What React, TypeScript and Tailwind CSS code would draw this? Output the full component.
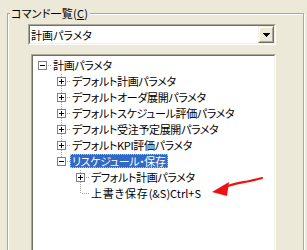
type Box = 'plus' | 'minus' | null;

type Node = {
  label: React.ReactNode;
  level: number;
  box: Box;
  vertical: 'full' | 'top' | 'none';
  selected?: boolean;
};

const nodes: Node[] = [
  { label: '計画パラメタ', level: 0, box: 'minus', vertical: 'none' },
  { label: 'デフォルト計画パラメタ', level: 1, box: 'plus', vertical: 'full' },
  { label: 'デフォルトオーダ展開パラメタ', level: 1, box: 'plus', vertical: 'full' },
  { label: 'デフォルトスケジュール評価パラメタ', level: 1, box: 'plus', vertical: 'full' },
  { label: 'デフォルト受注予定展開パラメタ', level: 1, box: 'plus', vertical: 'full' },
  { label: 'デフォルトKPI評価パラメタ', level: 1, box: 'plus', vertical: 'full' },
  { label: 'リスケジュール・保存', level: 1, box: 'minus', vertical: 'top', selected: true },
  { label: 'デフォルト計画パラメタ', level: 2, box: 'plus', vertical: 'full' },
  {
    label: (
      <>
        <span className="tracking-[0.8px]">上書き保存</span>
        <span className="tracking-normal">(&amp;S)Ctrl+S</span>
      </>
    ),
    level: 2,
    box: null,
    vertical: 'top',
  },
];

const DOT = '#a0a0a0';

function Gutter({ node }: { node: Node }) {
  const cx = 9 + node.level * 19;
  const width = 18 + node.level * 19;
  const dots: React.ReactElement[] = [];

  if (node.vertical !== 'none') {
    const end = node.vertical === 'full' ? 16 : 9;
    for (let y = 1; y < end; y += 2) {
      dots.push(<rect key={`v${y}`} x={cx} y={y} width={1} height={1} fill={DOT} />);
    }
  }
  for (let x = cx + 2; x < width; x += 2) {
    dots.push(<rect key={`h${x}`} x={x} y={8} width={1} height={1} fill={DOT} />);
  }

  return (
    <svg width={width} height={16} className="shrink-0" shapeRendering="crispEdges">
      {dots}
      {node.box && (
        <g>
          <rect x={cx - 4} y={4} width={9} height={9} fill="white" />
          <rect x={cx - 3.5} y={4.5} width={8} height={8} fill="none" stroke="#808080" />
          <rect x={cx - 2} y={8} width={5} height={1} fill="black" />
          {node.box === 'plus' && <rect x={cx} y={6} width={1} height={5} fill="black" />}
        </g>
      )}
    </svg>
  );
}

function TreeRow({ node }: { node: Node }) {
  return (
    <div className="flex h-4 items-center">
      <Gutter node={node} />
      <span
        className={
          node.selected
            ? 'flex h-[14px] items-center whitespace-nowrap border border-dotted border-[#c8c890] bg-[#316ac5] px-px text-white'
            : 'flex h-[14px] items-center whitespace-nowrap px-[2px] text-black'
        }
      >
        {node.label}
      </span>
    </div>
  );
}

export default function App() {
  return (
    <div className="relative h-[250px] w-[307px] overflow-hidden bg-[#ece9d8] pt-[6px] pl-[7px] font-['Noto_Sans_CJK_JP',sans-serif] text-[11px] leading-[14px] [font-feature-settings:'palt']">
      <fieldset className="h-[300px] w-[297px] border border-[#aca899] shadow-[inset_1px_1px_0_#ffffff,1px_1px_0_#ffffff]">
        <legend className="ml-[2px] bg-[#ece9d8] pl-px pr-[2px] tracking-[0.2px] text-black">
          コマンド一覧(<span className="underline underline-offset-1">C</span>)
        </legend>

        {/* combo box */}
        <div className="mt-[4px] ml-[20px] w-[248px] border border-t-[#aca899] border-l-[#aca899] border-r-white border-b-white">
          <div className="flex h-[19px] border border-t-[#716f64] border-l-[#716f64] border-r-[#f1efe2] border-b-[#f1efe2] bg-white">
            <div className="flex flex-1 items-center pl-px text-black">計画パラメタ</div>
            <div className="w-4 border border-t-[#f1efe2] border-l-[#f1efe2] border-r-[#716f64] border-b-[#716f64]">
              <div className="flex h-full items-center justify-center border border-t-white border-l-white border-r-[#aca899] border-b-[#aca899] bg-[#ece9d8]">
                <svg width="7" height="4" shapeRendering="crispEdges">
                  <polygon points="0,0 7,0 3.5,4" fill="black" />
                </svg>
              </div>
            </div>
          </div>
        </div>

        {/* tree view */}
        <div className="mt-[9px] ml-[23px] h-[240px] w-[245px] border border-t-[#aca899] border-l-[#aca899] border-r-white border-b-white">
          <div className="h-full border border-t-[#716f64] border-l-[#716f64] border-r-[#f1efe2] border-b-[#f1efe2] bg-white pt-px tracking-[-0.35px]">
            {nodes.map((n, i) => (
              <TreeRow key={i} node={n} />
            ))}
          </div>
        </div>
      </fieldset>

      {/* red annotation arrow */}
      <svg className="pointer-events-none absolute top-0 left-0" width="307" height="250">
        <path
          d="M262 178 C256 179.5 252 180.5 247 181.5 C241 182.5 236 183 226 186.5"
          fill="none"
          stroke="#ee1111"
          strokeWidth="2.2"
          strokeLinecap="round"
        />
        <polygon points="212,192 229,182 227,196" fill="#ee1111" />
      </svg>
    </div>
  );
}
